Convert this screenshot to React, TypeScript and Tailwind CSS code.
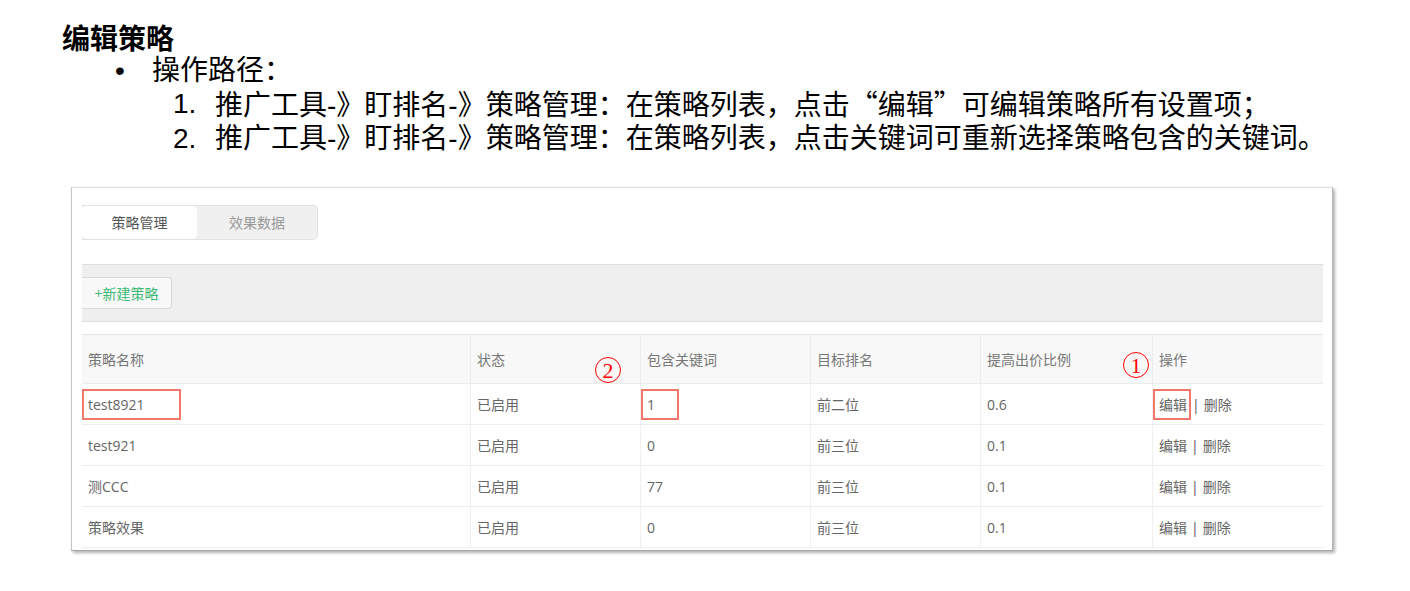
const headFont = {
  fontFamily: '"Liberation Sans", "Noto Sans CJK SC", sans-serif',
};
const cjkFont = { fontFamily: '"Noto Sans CJK SC", sans-serif' };
const uiFont = {
  fontFamily: '"Open Sans", "Noto Sans CJK SC", sans-serif',
};

type Row = { name: string; state: string; kw: string; rank: string; ratio: string };

const rows: Row[] = [
  { name: "test8921", state: "已启用", kw: "1", rank: "前二位", ratio: "0.6" },
  { name: "test921", state: "已启用", kw: "0", rank: "前三位", ratio: "0.1" },
  { name: "测CCC", state: "已启用", kw: "77", rank: "前三位", ratio: "0.1" },
  { name: "策略效果", state: "已启用", kw: "0", rank: "前三位", ratio: "0.1" },
];

const headers = ["策略名称", "状态", "包含关键词", "目标排名", "提高出价比例", "操作"];

// 标注用的带圈数字
function Circled({ n }: { n: string }) {
  return (
    <span
      className="flex h-[26px] w-[26px] items-center justify-center rounded-full border-[1.5px] border-[#f00] pt-[1px] text-[22px] leading-none text-[#f00]"
      style={{ fontFamily: '"Liberation Serif", serif' }}
    >
      {n}
    </span>
  );
}

function Mark({ children, w }: { children: React.ReactNode; w: string }) {
  return (
    <span className={`-ml-[6px] inline-flex h-[31px] items-center border-2 border-[#f3776b] pl-[4px] ${w}`}>
      {children}
    </span>
  );
}

export default function App() {
  return (
    <div className="min-h-[591px] bg-white pt-[21px] text-black" style={headFont}>
      {/* 说明文字 */}
      <div className="pl-[62px] text-[28px] leading-[33px]">
        <div className="font-bold" style={cjkFont}>编辑策略</div>
        <div className="flex pl-[53px]">
          <span className="w-[37px]">•</span>
          <span>操作路径：</span>
        </div>
        <div className="flex pl-[111px]">
          <span className="w-[42px]">1.</span>
          <span>
            推广工具-》盯排名-》策略管理：在策略列表，点击<span style={cjkFont}>“编辑”</span>可编辑策略所有设置项；
          </span>
        </div>
        <div className="flex pl-[111px]">
          <span className="w-[42px]">2.</span>
          <span>推广工具-》盯排名-》策略管理：在策略列表，点击关键词可重新选择策略包含的关键词。</span>
        </div>
      </div>

      {/* 截图面板 */}
      <div
        className="relative ml-[71px] mt-[32px] h-[364px] w-[1262px] overflow-hidden border border-t-[#dcdcdc] border-l-[#c4c4c4] border-r-[#b5b5b5] border-b-[#a8a8a8] bg-white pl-[10px] pr-[9px] pt-[17px] shadow-[2px_2px_3px_rgba(0,0,0,0.3)] text-[14px] text-[#666]"
        style={uiFont}
      >
        <div className="flex h-[35px] w-[236px] rounded-r-[5px] border border-l-0 border-[#e2e2e2] bg-[#f0f0f0]">
          <div className="flex w-[115px] items-center justify-center rounded-[5px] bg-white text-[#555]">策略管理</div>
          <div className="flex flex-1 items-center justify-center text-[#999]">效果数据</div>
        </div>

        <div className="mt-[24px] flex h-[58px] items-center border-y border-[#dedede] bg-[#efefef]">
          <button className="flex h-[32px] w-[90px] items-center justify-center rounded-r-[4px] border border-l-0 border-[#dadada] bg-[#f8f8f8] text-[14px] text-[#3dba74]">
            +新建策略
          </button>
        </div>

        <div className="relative mt-[12px] border-t border-[#e6e6e6]">
          <div className="grid h-[49px] grid-cols-[388px_170px_170px_170px_172px_1fr] border-b border-[#ececec] bg-[#f8f8f8] text-[#777]">
            {headers.map((h, i) => (
              <div key={h} className={`flex items-center pl-[6px] ${i > 0 ? "border-l border-[#ececec]" : ""}`}>
                {h}
              </div>
            ))}
          </div>
          {rows.map((r, i) => (
            <div key={r.name} className="grid h-[41px] grid-cols-[388px_170px_170px_170px_172px_1fr] border-b border-[#ededed]">
              <div className="flex items-center pl-[6px]">
                {i === 0 ? <Mark w="w-[99px]">{r.name}</Mark> : r.name}
              </div>
              <div className="flex items-center border-l border-[#f0f0f0] pl-[6px]">{r.state}</div>
              <div className="flex items-center border-l border-[#f0f0f0] pl-[6px]">
                {i === 0 ? <Mark w="w-[38px]">{r.kw}</Mark> : r.kw}
              </div>
              <div className="flex items-center border-l border-[#f0f0f0] pl-[6px]">{r.rank}</div>
              <div className="flex items-center border-l border-[#f0f0f0] pl-[6px]">{r.ratio}</div>
              <div className="flex items-center border-l border-[#f0f0f0] pl-[6px]">
                {i === 0 ? <Mark w="w-[38px]">编辑</Mark> : <span className="mr-[4px]">编辑</span>}
                <span className={`${i === 0 ? "ml-[1px]" : ""} mr-[4px] text-[#555]`}>|</span>
                <span>删除</span>
              </div>
            </div>
          ))}

          <div className="absolute left-[513px] top-[22px]">
            <Circled n="2" />
          </div>
          <div className="absolute left-[1041px] top-[17px]">
            <Circled n="1" />
          </div>
        </div>
      </div>
    </div>
  );
}
